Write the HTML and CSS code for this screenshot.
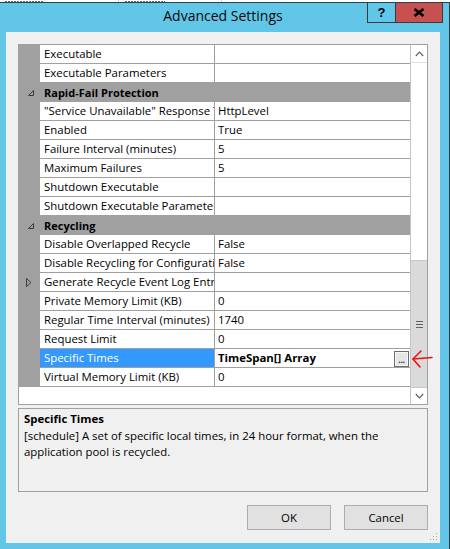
FILE: index.html
```html
<!DOCTYPE html>
<html>
<head>
<meta charset="utf-8">
<link rel="stylesheet" href="styles.css">
</head>
<body>
<div class="screen">
  <div class="bgstrip"><span class="frag f1"></span><span class="sep s1"></span><span class="frag f2"></span><span class="sep s2"></span></div>
  <div class="window">
    <div class="titlebar">
      <div class="title">Advanced Settings</div>
      <div class="caption-buttons">
        <div class="cbtn help">?</div>
        <div class="cbtn close">
          <svg width="12" height="9" viewBox="0 0 12 9"><path d="M1.5 1 L10.5 8 M10.5 1 L1.5 8" stroke="#000" stroke-width="2.6" fill="none"/></svg>
        </div>
      </div>
    </div>
    <div class="client">
      <div class="grid">
        <div class="rows">
          <div class="row"><div class="gut"></div><div class="name">Executable</div><div class="val"></div></div>
          <div class="row"><div class="gut"></div><div class="name">Executable Parameters</div><div class="val"></div></div>
          <div class="row cat"><div class="gut"><svg class="exp" width="7" height="7" viewBox="0 0 7 7"><path d="M5.5 0.5 L5.5 5.5 L0.5 5.5 Z" fill="none" stroke="#3c3c3c" stroke-width="1"/></svg></div><div class="catname">Rapid-Fail Protection</div></div>
          <div class="row"><div class="gut"></div><div class="name">"Service Unavailable" Response Type</div><div class="val">HttpLevel</div></div>
          <div class="row"><div class="gut"></div><div class="name">Enabled</div><div class="val">True</div></div>
          <div class="row"><div class="gut"></div><div class="name">Failure Interval (minutes)</div><div class="val">5</div></div>
          <div class="row"><div class="gut"></div><div class="name">Maximum Failures</div><div class="val">5</div></div>
          <div class="row"><div class="gut"></div><div class="name">Shutdown Executable</div><div class="val"></div></div>
          <div class="row"><div class="gut"></div><div class="name">Shutdown Executable Parameters</div><div class="val"></div></div>
          <div class="row cat"><div class="gut"><svg class="exp" width="7" height="7" viewBox="0 0 7 7"><path d="M5.5 0.5 L5.5 5.5 L0.5 5.5 Z" fill="none" stroke="#3c3c3c" stroke-width="1"/></svg></div><div class="catname">Recycling</div></div>
          <div class="row"><div class="gut"></div><div class="name">Disable Overlapped Recycle</div><div class="val">False</div></div>
          <div class="row"><div class="gut"></div><div class="name">Disable Recycling for Configuration Changes</div><div class="val">False</div></div>
          <div class="row"><div class="gut"><svg class="col" width="6" height="9" viewBox="0 0 6 9"><path d="M0.5 0.5 L5 4.5 L0.5 8.5 Z" fill="none" stroke="#3c3c3c" stroke-width="1"/></svg></div><div class="name">Generate Recycle Event Log Entry</div><div class="val"></div></div>
          <div class="row"><div class="gut"></div><div class="name">Private Memory Limit (KB)</div><div class="val">0</div></div>
          <div class="row"><div class="gut"></div><div class="name">Regular Time Interval (minutes)</div><div class="val">1740</div></div>
          <div class="row"><div class="gut"></div><div class="name">Request Limit</div><div class="val">0</div></div>
          <div class="row selected"><div class="gut"></div><div class="name">Specific Times</div><div class="val"><span class="valtext">TimeSpan[] Array</span><span class="ellipsis">...</span></div></div>
          <div class="row"><div class="gut"></div><div class="name">Virtual Memory Limit (KB)</div><div class="val">0</div></div>
          <div class="rows-fill"></div>
        </div>
        <div class="vscroll">
          <div class="sb-up"><svg width="9" height="6" viewBox="0 0 9 6"><path d="M0.8 5 L4.5 1.2 L8.2 5" fill="none" stroke="#606060" stroke-width="1.2"/></svg></div>
          <div class="sb-track"></div>
          <div class="sb-thumb"><span></span><span></span><span></span></div>
          <div class="sb-down"><svg width="9" height="6" viewBox="0 0 9 6"><path d="M0.8 1 L4.5 4.8 L8.2 1" fill="none" stroke="#606060" stroke-width="1.2"/></svg></div>
        </div>
      </div>
      <div class="desc">
        <div class="desc-title">Specific Times</div>
        <div class="desc-text">[schedule] A set of specific local times, in 24 hour format, when the application pool is recycled.</div>
      </div>
      <div class="buttons">
        <div class="btn">OK</div>
        <div class="btn">Cancel</div>
      </div>
      <svg class="grip" width="9" height="9" viewBox="0 0 9 9">
        <rect x="7" y="1" width="1" height="1" fill="#a8a8a8"/>
        <rect x="4" y="4" width="1" height="1" fill="#a8a8a8"/>
        <rect x="7" y="4" width="1" height="1" fill="#a8a8a8"/>
        <rect x="1" y="7" width="1" height="1" fill="#a8a8a8"/>
        <rect x="4" y="7" width="1" height="1" fill="#a8a8a8"/>
        <rect x="7" y="7" width="1" height="1" fill="#a8a8a8"/>
      </svg>
    </div>
  </div>
  <svg class="redarrow" width="26" height="22" viewBox="0 0 26 22">
    <path d="M3 10 L22 8.5" fill="none" stroke="#ee1111" stroke-width="1.6" stroke-linecap="round"/>
    <path d="M11 2 L3 10 L10 18" fill="none" stroke="#ee1111" stroke-width="1.6" stroke-linecap="round" stroke-linejoin="round"/>
  </svg>
</div>
</body>
</html>
```
FILE: styles.css
```css
html, body {
  margin: 0;
  padding: 0;
  background: #ffffff;
}

body {
  font-family: "Open Sans", "Noto Sans", sans-serif;
  font-size: 11.4px;
  color: #000;
}

.screen {
  width: 450px;
  height: 549px;
  position: relative;
  overflow: hidden;
}

.bgstrip {
  height: 2px;
  display: flex;
  align-items: flex-end;
  background: #ffffff;
}

.frag {
  height: 1px;
  background: repeating-linear-gradient(90deg, #6a6a6a 0 2px, #ffffff 2px 3px);
}

.f1 { margin-left: 5px; width: 38px; }
.f2 { margin-left: 6px; width: 40px; }

.sep {
  width: 1px;
  height: 2px;
  background: #d4d4d4;
}

.s1 { margin-left: 75px; }
.s2 { margin-left: 56px; }

.window {
  box-sizing: border-box;
  height: 547px;
  background: #62c6e8;
  border-top: 1px solid #2f3f47;
  border-right: 1px solid #2f3f47;
  padding: 0 9px 6px 6px;
}

.titlebar {
  height: 29px;
  display: grid;
  margin: 0 -9px 0 -6px;
}

.title,
.caption-buttons {
  grid-area: 1 / 1;
}

.title {
  text-align: center;
  font-size: 14px;
  line-height: 25px;
  padding-right: 3px;
  color: #0a0a0a;
}

.caption-buttons {
  justify-self: end;
  align-self: start;
  display: flex;
  margin-right: 6px;
}

.cbtn {
  box-sizing: border-box;
  height: 20px;
  border-bottom: 1px solid #3a3a3a;
  border-left: 1px solid #3a3a3a;
  display: flex;
  align-items: center;
  justify-content: center;
}

.help {
  width: 28px;
  font-family: "Liberation Sans", sans-serif;
  font-weight: bold;
  font-size: 13px;
  line-height: 1;
}

.close {
  width: 48px;
  background: #c75050;
  border-right: 1px solid #3a3a3a;
}

.client {
  box-sizing: border-box;
  height: 511px;
  background: #f0f0f0;
  padding: 12px;
  position: relative;
  display: flex;
  flex-direction: column;
}

.grid {
  box-sizing: border-box;
  height: 361px;
  border: 1px solid #a0a0a0;
  display: flex;
  background: #ffffff;
}

.rows {
  width: 391px;
  display: flex;
  flex-direction: column;
}

.row {
  display: flex;
  height: 19px;
}

.gut {
  width: 21px;
  flex: none;
  background: #a0a0a0;
  display: flex;
  align-items: center;
  justify-content: center;
}

.name,
.val {
  box-sizing: border-box;
  height: 19px;
  line-height: 18px;
  border-bottom: 1px solid #a0a0a0;
  white-space: nowrap;
  overflow: hidden;
}

.name {
  width: 175px;
  flex: none;
  padding-left: 4px;
  border-right: 1px solid #a0a0a0;
}

.val {
  flex: 1;
  padding-left: 3px;
  display: flex;
}

.cat {
  background: #a0a0a0;
}

.cat .gut {
  padding-left: 3px;
  box-sizing: border-box;
}

.catname {
  font-weight: bold;
  font-size: 11px;
  line-height: 19px;
  padding-left: 4px;
}

.exp {
  margin-top: 1px;
}

.col {
  margin-left: -2px;
}

.selected .name {
  background: #3399ff;
  color: #ffffff;
}

.selected .val {
  font-weight: bold;
}

.valtext {
  flex: 1;
}

.ellipsis {
  box-sizing: border-box;
  width: 15px;
  height: 16px;
  margin-top: 2px;
  margin-right: 1px;
  border: 1px solid #6c6c6c;
  background: #e6e6e6;
  box-shadow: inset 0 0 0 1px #f8f8f8;
  font-weight: normal;
  font-size: 10px;
  line-height: 14px;
  text-align: center;
  letter-spacing: -0.5px;
}

.rows-fill {
  flex: 1;
}

.vscroll {
  width: 17px;
  box-sizing: border-box;
  border-left: 1px solid #c4c4c4;
  display: flex;
  flex-direction: column;
}

.sb-up {
  height: 18px;
  box-sizing: border-box;
  border-bottom: 1px solid #e0e0e0;
  display: flex;
  align-items: center;
  justify-content: center;
}

.sb-track {
  height: 197px;
}

.sb-thumb {
  height: 127px;
  background: #dadada;
  box-sizing: border-box;
  border-top: 1px solid #c6c6c6;
  display: flex;
  flex-direction: column;
  align-items: center;
  justify-content: center;
  gap: 2px;
}

.sb-thumb span {
  width: 7px;
  height: 1px;
  background: #606060;
}

.sb-down {
  height: 17px;
  box-sizing: border-box;
  border-top: 1px solid #c8c8c8;
  background: #ffffff;
  display: flex;
  align-items: center;
  justify-content: center;
}

.desc {
  box-sizing: border-box;
  height: 84px;
  margin-top: 3px;
  border: 1px solid #a0a0a0;
  padding: 2px 5px 0 5px;
}

.desc-title {
  font-weight: bold;
  line-height: 16px;
  margin-bottom: 1px;
}

.desc-text {
  line-height: 16px;
}

.buttons {
  margin-top: 13px;
  display: flex;
  justify-content: flex-end;
  gap: 13px;
}

.btn {
  box-sizing: border-box;
  width: 84px;
  height: 25px;
  border: 1px solid #adadad;
  background: #e1e1e1;
  text-align: center;
  line-height: 23px;
}

.grip {
  position: absolute;
  right: 2px;
  bottom: 2px;
}

.redarrow {
  position: absolute;
  left: 410px;
  top: 349px;
}
```
